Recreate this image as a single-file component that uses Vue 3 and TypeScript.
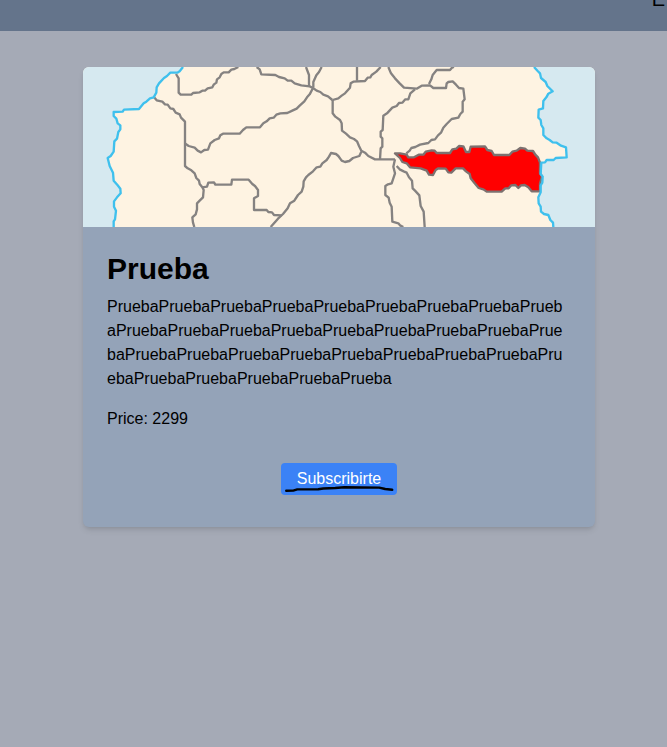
<script setup lang="ts">
interface Plan {
  title: string
  description: string
  price: number
}

const plan: Plan = {
  title: 'Prueba',
  description: 'Prueba'.repeat(32),
  price: 2299,
}

const borders: string[] = [
  '279,42 287,55 287,98 293,104 325,104 330,99 350,97 358,92 366,92 374,85 388,82 392,74 400,68 402,58 410,52 415,42 422,37 437,37 445,29 454,27 466,21',
  '212,110 221,121 238,125 246,133 254,134 262,145 271,147 278,158 290,163 294,173 306,185 306,318 314,325 325,331 335,340 340,354 348,362 350,372 358,382 362,390 360,412 350,422 342,430 342,448 338,463 328,472 330,488 334,501',
  '306,250 317,258 335,263 344,272 354,277 364,270 375,269 382,250 395,240 408,235 412,226 420,221 470,221 480,210 490,202 531,202 541,190 551,184 560,175 572,173 580,164 592,160 613,159 628,152 641,146 650,137 664,124 672,112 680,103 690,84',
  '521,21 530,28 535,43 577,45 588,51 605,55 614,62 625,62 635,70 655,76 680,79 690,84 701,92 712,96 721,104 735,109 748,120',
  '669,21 678,45 678,80',
  '716,21 708,36 700,46 691,66 691,82',
  '749,120 766,115 776,107 786,100 801,83 803,70 811,65 846,63 854,53 862,52 866,45 880,35 893,21',
  '822,21 822,62',
  '749,120 749,160 757,170 771,180 776,190 777,212 789,221 801,232 813,237 822,244 828,258 835,272 846,278 856,288 876,298 936,298',
  '835,275 829,288 810,294 799,303 786,306 776,302 766,288 759,282 744,279 738,290 731,300 718,310 712,320 701,322 690,334 676,345 669,352 662,364 661,380 656,395 645,405 634,422 621,430 614,445 600,462 585,476 563,501',
  '358,382 372,380 376,368 393,367 397,374 445,374 447,359 497,359 508,372 516,378 525,390 525,408 513,415 513,450 551,450 556,456 567,457 573,465 596,466',
  '891,298 893,265 898,260 898,235 893,230 893,215 899,210 901,167 912,160 928,143 941,138 948,129 958,128 967,118 976,118 982,100 996,88',
  '916,21 924,40 936,55 950,70 963,83 1001,86 1016,77 1041,76 1051,84 1089,84 1091,70 1096,66 1109,64 1119,74 1128,84 1141,86 1145,118 1139,125 1139,155 1132,162 1126,173 1106,177 1091,192 1081,203 1074,218 1065,226 1056,238 1045,240 1036,249 1011,254 997,261 985,264 980,272 970,280',
  '1038,72 1045,58 1049,45 1061,30 1101,30 1107,23 1113,21',
  '936,298 931,320 936,340 926,370 915,373 907,378 907,405 917,413 920,428 926,440 928,485 946,490 951,496 961,501',
  '941,318 950,328 962,334 971,338 978,352 987,362 989,385 996,392 1009,406 1013,438 1022,455 1025,501',
]

const westCoast =
  '300,21 290,34 283,38 262,38 252,48 243,54 228,70 221,82 220,98 212,112 201,115 190,125 182,130 168,147 123,149 119,155 92,156 92,168 100,176 104,190 112,196 112,208 106,216 102,236 94,244 92,275 83,288 74,294 80,318 90,338 92,362 104,376 112,386 113,400 102,412 93,424 93,440 99,452 96,478 92,484 92,501'
const eastCoast =
  '1353,21 1364,33 1371,40 1374,54 1388,66 1393,78 1409,94 1396,101 1390,112 1381,123 1380,145 1367,149 1366,173 1373,180 1375,195 1381,205 1381,225 1391,235 1400,240 1409,247 1421,248 1434,257 1449,262 1451,292 1418,294 1412,300 1391,300 1386,307 1375,308 1373,342 1379,350 1378,368 1373,376 1373,397 1366,412 1367,430 1373,440 1374,455 1383,462 1396,465 1402,480 1410,488 1411,501'
const region =
  '936,280 951,280 971,284 976,292 993,292 1007,284 1021,284 1028,275 1046,271 1055,272 1061,279 1101,279 1108,268 1120,266 1128,258 1141,259 1149,276 1159,276 1163,260 1206,259 1213,270 1226,273 1233,285 1279,285 1288,275 1301,272 1312,264 1326,266 1333,272 1350,273 1357,284 1365,292 1371,308 1371,340 1377,350 1371,370 1371,394 1346,394 1336,382 1325,375 1314,376 1306,384 1297,375 1285,376 1277,385 1267,385 1256,395 1211,395 1201,388 1187,384 1175,370 1163,355 1160,342 1149,334 1140,325 1118,325 1105,338 1096,337 1088,326 1066,325 1058,330 1050,345 1038,344 1031,332 1013,325 981,322 971,310 958,306 951,294'
</script>

<template>
  <div class="page">
    <header class="topbar"><span class="brand">E</span></header>
    <main class="content">
      <article class="card">
        <svg class="map" viewBox="0 21 1536 480" preserveAspectRatio="xMidYMid slice" aria-hidden="true">
          <rect class="land" y="21" width="1536" height="480" />
          <polygon class="water" :points="`0,21 ${westCoast} 0,501`" />
          <polygon class="water" :points="`${eastCoast} 1536,501 1536,21`" />
          <polyline v-for="(line, i) in borders" :key="i" class="border" :points="line" />
          <polygon class="region" :points="region" />
          <polyline class="coast" :points="westCoast" />
          <polyline class="coast" :points="eastCoast" />
        </svg>
        <div class="body">
          <h1 class="title">{{ plan.title }}</h1>
          <p class="description">{{ plan.description }}</p>
          <p class="price">Price: {{ plan.price }}</p>
          <div class="actions">
            <button class="subscribe" type="button">
              Subscribirte
              <svg class="scribble" viewBox="0 0 116 32" aria-hidden="true">
                <path d="M5 27.8 L12 27.6 L16 26.4 L37 26.2 L42 25.5 L54 25 L63 24.3 L98 24.6 L104 26 L111 26.8" />
              </svg>
            </button>
          </div>
        </div>
      </article>
    </main>
  </div>
</template>

<style>
body {
  margin: 0;
  background: #a5aab6;
}
</style>

<style scoped>
.page {
  display: flex;
  flex-direction: column;
  min-height: 100vh;
  overflow: hidden;
  color: #000;
  font-family: 'Liberation Sans', Arial, sans-serif;
  font-size: 16px;
  line-height: 24px;
}

.topbar {
  display: flex;
  justify-content: flex-end;
  margin-top: -15px;
  padding: 0 2px 18px;
  background: #64748b;
  font-size: 20px;
  line-height: 28px;
}

.content {
  padding: 36px 24px 36px 35px;
}

.card {
  max-width: 512px;
  margin: 0 auto;
  overflow: hidden;
  border-radius: 6px;
  background: #94a3b8;
  box-shadow: 0 4px 6px -1px rgb(0 0 0 / 10%), 0 2px 4px -2px rgb(0 0 0 / 10%);
}

.map {
  display: block;
  width: 100%;
  height: 160px;
}

.land {
  fill: #fef3e2;
}

.water {
  fill: #d6e9f0;
}

.border,
.coast {
  fill: none;
  stroke: #858281;
  stroke-width: 7;
  stroke-linejoin: round;
}

.coast {
  stroke: #3fc0ed;
}

.region {
  fill: #f00;
  stroke: #7c7170;
  stroke-width: 7;
  stroke-linejoin: round;
}

.body {
  padding: 24px 24px 32px;
}

.title {
  margin: 0 0 8px;
  font-size: 30px;
  line-height: 36px;
}

.description {
  margin: 0 0 16px;
  overflow-wrap: anywhere;
}

.price {
  margin: 0 0 32px;
}

.actions {
  display: flex;
  justify-content: center;
}

.subscribe {
  position: relative;
  padding: 4px 16px;
  border: 0;
  border-radius: 4px;
  background: #3b82f6;
  color: #fff;
  font: inherit;
  cursor: pointer;
}

.scribble {
  position: absolute;
  inset: 0;
  width: 100%;
  height: 100%;
  fill: none;
  stroke: #000;
  stroke-width: 2.4;
  stroke-linecap: round;
  stroke-linejoin: round;
}
</style>
